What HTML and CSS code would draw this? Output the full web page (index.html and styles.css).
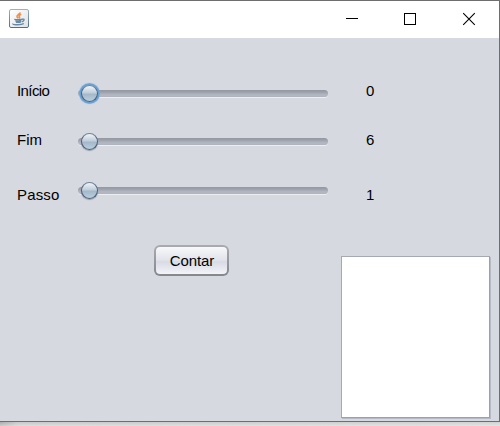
FILE: index.html
```html
<!DOCTYPE html>
<html lang="pt">
<head>
<meta charset="utf-8">
<title>Contador</title>
<link rel="stylesheet" href="styles.css">
</head>
<body>
<div class="window">
  <header class="titlebar">
    <svg class="app-icon" width="20" height="19" viewBox="0 0 20 19">
      <defs>
        <linearGradient id="edge" x1="0" y1="0" x2="0" y2="1"><stop offset="0" stop-color="#9db1c0"/><stop offset="1" stop-color="#4d6f89"/></linearGradient>
        <linearGradient id="face" x1="0" y1="0" x2="1" y2="1"><stop offset="0" stop-color="#fff"/><stop offset="1" stop-color="#dde2e5"/></linearGradient>
      </defs>
      <rect x=".5" y=".5" width="19" height="18" rx="1.5" fill="url(#face)" stroke="url(#edge)"/>
      <path d="M11 3.3C11.3 5 7.4 5.8 8 7.6C8.2 8.4 8.9 8.7 9.2 9.4M12.2 5.3C10 6.3 9.7 7.1 10.5 8C10.9 8.6 10.6 9 10.1 9.5" fill="none" stroke="#ee8f45" stroke-width="1.6"/>
      <path d="M5.3 10.4Q9 11.2 13 10.2M6.3 11.9Q9 12.8 12.3 11.8M7 13Q9 13.8 11.8 13M13 10.3Q15.6 9.6 14.9 11.2Q14.4 12.3 12.8 12.7M4 14.6Q3.3 15.5 7 15.7Q13 15.9 14.8 14.5" fill="none" stroke="#6889a4" stroke-width="1.4"/>
    </svg>
    <svg class="controls" width="124" height="14" viewBox="0 0 124 14" fill="none" stroke="#000">
      <path d="M0 7.5H12"/>
      <rect x="58.5" y="2.5" width="11" height="11"/>
      <path d="M117.2 2.2L128.8 13.8M128.8 2.2L117.2 13.8" stroke-width="1.1"/>
    </svg>
  </header>
  <main class="content">
    <div class="labels"><span class="tight">Início</span><span>Fim</span><span class="wide">Passo</span></div>
    <div class="sliders">
      <div class="slider"><i class="thumb focused"></i></div>
      <div class="slider"><i class="thumb"></i></div>
      <div class="slider"><i class="thumb"></i></div>
    </div>
    <div class="values"><span>0</span><span>6</span><span>1</span></div>
    <button class="count">Contar</button>
    <div class="output"></div>
  </main>
</div>
</body>
</html>
```
FILE: styles.css
```css
* { box-sizing: border-box; }
body {
  margin: 0;
  height: 426px;
  overflow: hidden;
  background: linear-gradient(#0000, #0000 422px, #fff6), linear-gradient(90deg, #aaa, #c8c8c8 18px, #d2d2d2);
  font: 15px/17px "Liberation Sans", Arial, sans-serif;
  color: #000;
}
.window {
  width: 500px;
  height: 422px;
  border: solid #6e6e70;
  border-width: 1px 1px 1px 0;
  background: #d6d9e0;
}
.titlebar {
  height: 37px;
  display: flex;
  justify-content: space-between;
  align-items: flex-start;
  padding: 8px 29px 0 9px;
  background: #fff;
}
.controls { margin-top: 2px; overflow: visible; }
.content {
  height: 383px;
  display: grid;
  grid-template-columns: 61px 250px 1fr;
  grid-template-rows: 206px 1fr;
  padding-left: 17px;
}
.labels, .values {
  display: flex;
  flex-direction: column;
  padding-top: 44px;
}
.tight { letter-spacing: -.6px; }
.wide { letter-spacing: .15px; }
.values { padding-left: 38px; }
.labels span:nth-child(2), .values span:nth-child(2) { margin: 32px 0 38px; }
.sliders { padding-top: 43px; }
.slider {
  height: 24px;
  display: flex;
  align-items: center;
  margin-bottom: 24px;
}
.slider:nth-child(2) { margin-bottom: 25px; }
.slider::before {
  content: "";
  width: 250px;
  height: 7px;
  border-radius: 4px;
  background: linear-gradient(#9297a1, #9ca1ab 30%, #b4b8c2 70%, #afb3bd);
  box-shadow: 0 1px #eceef2;
}
.thumb {
  flex: none;
  width: 17px;
  height: 17px;
  margin-left: -247px;
  border: 1.5px solid #496079;
  border-top-color: #71849a;
  border-radius: 50%;
  background: linear-gradient(#f1f4f7, #c0cedb 45%, #a4b8ca 55%, #b9cfdf);
  box-shadow: 0 1px 1px #959ba8;
}
.focused { box-shadow: 0 0 0 1.5px #67a0d3, 0 0 1px 2px #83aeda; }
.count {
  grid-column: 1 / 3;
  width: 75px;
  height: 31px;
  margin: 1px 0 0 137px;
  padding: 0 0 1px 1px;
  border: 2px solid transparent;
  border-radius: 6px;
  background: linear-gradient(#f7f8fa, #e2e4eb 48%, #d8dbe4 55%, #f2f4f9) padding-box, linear-gradient(#a9abb0, #85878c) border-box;
  font: inherit;
  letter-spacing: -.1px;
  color: inherit;
}
.output {
  width: 149px;
  height: 162px;
  margin: 12px 0 0 13px;
  background: #fff;
  border: 1px solid #a5a9b5;
  border-right: 1px solid #9ca0ac;
  border-bottom: 1px solid #9ca0ac;
  box-shadow: 1px 1px #b6bac5;
}
```
